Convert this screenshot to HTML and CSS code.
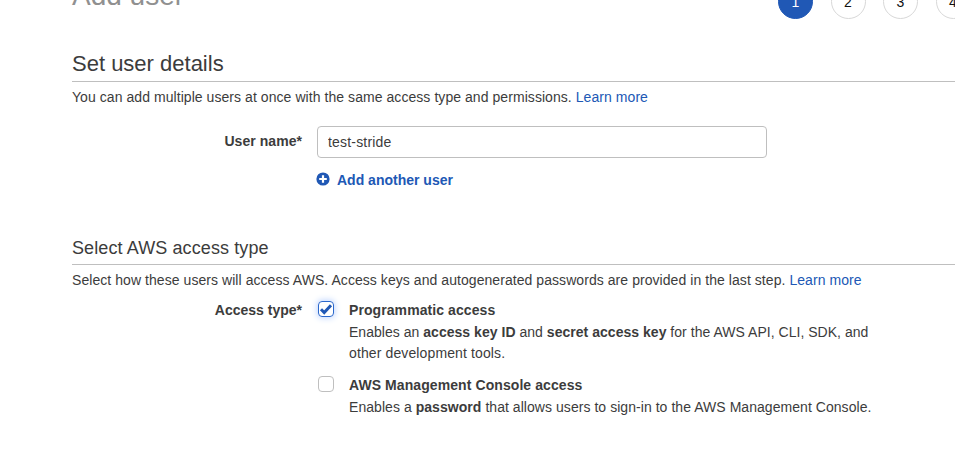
FILE: index.html
```html
<!DOCTYPE html>
<html lang="en">
<head>
<meta charset="utf-8">
<title>Add user</title>
<link rel="stylesheet" href="styles.css">
</head>
<body>
<main class="page">
  <header class="topbar">
    <h1 class="title">Add user</h1>
    <ol class="steps">
      <li class="step current">1</li>
      <li class="step">2</li>
      <li class="step">3</li>
      <li class="step">4</li>
    </ol>
  </header>

  <section class="details">
    <h2 class="heading">Set user details</h2>
    <p class="intro">You can add multiple users at once with the same access type and permissions. <a href="#">Learn more</a></p>
    <div class="row">
      <label class="label" for="name">User name*</label>
      <input class="input" id="name" type="text" value="test-stride">
    </div>
    <a class="add" href="#">
      <svg class="plus" viewBox="0 0 14 14"><circle cx="7" cy="7" r="6.6" fill="#2058b5"/><path d="M7 3.2v7.6M3.2 7h7.6" stroke="#fff" stroke-width="2.2"/></svg>
      <span class="add-text">Add another user</span>
    </a>
  </section>

  <section class="access">
    <h3 class="heading small">Select AWS access type</h3>
    <p class="intro">Select how these users will access AWS. Access keys and autogenerated passwords are provided in the last step. <a href="#">Learn more</a></p>
    <div class="row types">
      <span class="label">Access type*</span>
      <div class="options">
        <div class="option">
          <span class="box checked"><svg viewBox="0 0 14 14"><path d="M2 7.3l3.2 3.2L12 3.3" fill="none" stroke="#2058b5" stroke-width="3"/></svg></span>
          <div class="text">
            <b class="name programmatic">Programmatic access</b>
            <p class="line keys">Enables an <b>access key ID</b> and <b>secret access key</b> for the AWS API, CLI, SDK, and</p>
            <p class="line tools">other development tools.</p>
          </div>
        </div>
        <div class="option">
          <span class="box"></span>
          <div class="text">
            <b class="name console">AWS Management Console access</b>
            <p class="line password">Enables a <b>password</b> that allows users to sign-in to the AWS Management Console.</p>
          </div>
        </div>
      </div>
    </div>
  </section>
</main>
</body>
</html>
```
FILE: styles.css
```css
* { box-sizing: border-box; }
body {
  margin: 0;
  height: 469px;
  overflow: hidden;
  background: #fff;
  color: #3c3c3c;
  font: 14px/22px "Liberation Sans", Arial, sans-serif;
}
h1, h2, h3, p, ol { margin: 0; padding: 0; font-weight: normal; }
a { color: #2058b5; text-decoration: none; }
.page { padding-left: 72px; white-space: nowrap; }
.topbar { display: flex; height: 48px; }
.title {
  flex: none;
  width: 706px;
  margin-top: -20px;
  color: #909090;
  font-size: 28px;
  line-height: 32px;
}
.steps { display: flex; flex: none; gap: 17.5px; margin-top: -16px; list-style: none; }
.step {
  flex: none;
  width: 35px;
  height: 35px;
  border: 1px solid #d8d8d8;
  border-radius: 50%;
  color: #111;
  text-align: center;
  line-height: 34px;
}
.current { background: #2058b5; border-color: #2058b5; color: #fff; }
.heading {
  height: 34px;
  border-bottom: 1px solid #bfbfbf;
  font-size: 22px;
  line-height: 31px;
}
.small { font-size: 18px; line-height: 34px; letter-spacing: 0.1px; }
.intro { height: 31px; line-height: 30px; letter-spacing: 0.06px; }
.row { display: flex; }
.label { width: 230px; margin-right: 15px; text-align: right; font-weight: bold; }
.details { height: 183px; }
.details .row { margin-top: 13px; }
.details .label { line-height: 31px; letter-spacing: 0.05px; }
.input {
  width: 450px;
  height: 32px;
  padding: 0 10px;
  border: 1px solid #bfbfbf;
  border-radius: 4px;
  color: #3c3c3c;
  font: inherit;
  letter-spacing: 0.18px;
}
.add { display: flex; margin: 11px 0 0 244px; font-weight: bold; }
.plus { width: 14px; height: 14px; margin: 3px 7px 0 0; }
.types { margin-top: 3px; }
.option { display: flex; height: 75px; }
.box {
  width: 16px;
  height: 16px;
  margin: 2px 15px 0 1px;
  border: 1px solid #bfbfbf;
  border-radius: 4px;
}
.checked { border-color: #2b68cc; box-shadow: 0 0 6px 1px #bfd5ff; }
.box svg { display: block; width: 14px; height: 14px; }
.name { display: block; letter-spacing: 0.08px; }
.line { position: relative; top: 1px; line-height: 21px; letter-spacing: 0.03px; }
.tools { letter-spacing: 0.12px; }
.password { letter-spacing: 0.05px; }
```
